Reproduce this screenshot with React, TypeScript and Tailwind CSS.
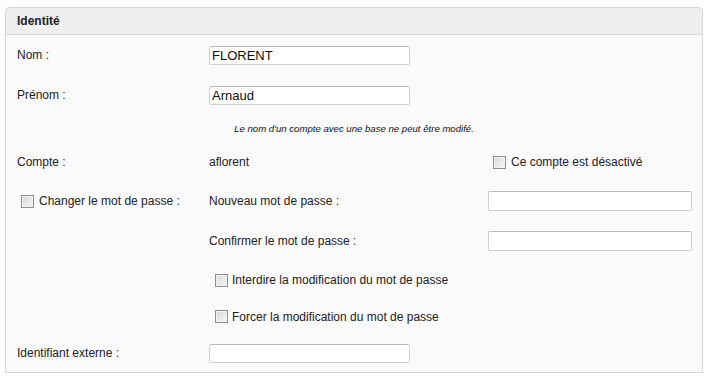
import { ReactNode } from 'react';

const Box = () => (
  <span className="inline-block w-[13px] h-[13px] border border-[#8e8e8e] bg-gradient-to-br from-[#d6d6d6] to-[#f7f7f7] shadow-[inset_0_0_0_1px_#f4f4f4] shrink-0" />
);

const Field = ({ value = '', className = '' }: { value?: string; className?: string }) => (
  <div
    className={`bg-white border border-[#d0d0d0] border-t-[#b9b9b9] rounded-[2px] pl-[2px] text-[13px] leading-none flex items-center text-[#111] ${className}`}
  >
    {value}
  </div>
);

const Row = ({ h, children }: { h: string; children: ReactNode }) => (
  <div className={`flex items-center ${h}`}>{children}</div>
);

export default function App() {
  return (
    <div className="w-[709px] h-[379px] bg-white pt-[7px] pl-[5px] font-['Liberation_Sans',Arial,sans-serif] text-[12px] text-[#222]">
      <div className="w-[698px] h-[366px] border border-[#d6d6d6] rounded-t-[4px] bg-[#fafafa] overflow-hidden">
        <div className="h-[27px] bg-[#efefef] border-b border-[#d9d9d9] pl-[11px] flex items-center font-bold">
          Identité
        </div>
        <div className="pl-[11px]">
          <Row h="h-[40px]">
            <span className="w-[192px]">Nom :</span>
            <Field value="FLORENT" className="w-[201px] h-[19px]" />
          </Row>
          <Row h="h-[40px]">
            <span className="w-[192px]">Prénom :</span>
            <Field value="Arnaud" className="w-[201px] h-[19px]" />
          </Row>
          <div className="h-[28px] flex items-center justify-center pr-[11px] italic text-[9.6px] text-[#111]">
            Le nom d'un compte avec une base ne peut être modifé.
          </div>
          <Row h="h-[38px]">
            <span className="w-[192px]">Compte :</span>
            <span className="w-[279px]">aflorent</span>
            <label className="flex items-center gap-[5px] pl-[5px]">
              <Box />
              Ce compte est désactivé
            </label>
          </Row>
          <Row h="h-[40px]">
            <label className="w-[192px] flex items-center gap-[5px] pl-[4px]">
              <Box />
              Changer le mot de passe :
            </label>
            <span className="w-[279px]">Nouveau mot de passe :</span>
            <Field className="w-[204px] h-[20px]" />
          </Row>
          <Row h="h-[40px]">
            <span className="w-[192px]" />
            <span className="w-[279px]">Confirmer le mot de passe :</span>
            <Field className="w-[204px] h-[20px]" />
          </Row>
          <Row h="h-[38px]">
            <span className="w-[198px]" />
            <label className="flex items-center gap-[4px]">
              <Box />
              Interdire la modification du mot de passe
            </label>
          </Row>
          <Row h="h-[35px]">
            <span className="w-[198px]" />
            <label className="flex items-center gap-[4px]">
              <Box />
              Forcer la modification du mot de passe
            </label>
          </Row>
          <Row h="h-[38px]">
            <span className="w-[192px]">Identifiant externe :</span>
            <Field className="w-[201px] h-[19px]" />
          </Row>
        </div>
      </div>
    </div>
  );
}
